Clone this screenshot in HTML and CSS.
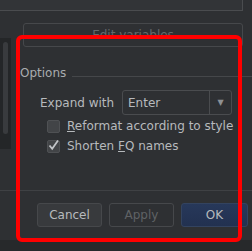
FILE: index.html
```html
<!DOCTYPE html>
<html lang="en">
<head>
    <meta charset="UTF-8">
    <meta name="viewport" content="width=device-width, initial-scale=1.0">
    <title>Live template options</title>
    <link rel="stylesheet" href="styles.css">
</head>
<body>
    <div class="top-box"></div>
    <div class="middle">
        <div class="side-panel">
            <div class="side-thumb"></div>
        </div>
        <div class="main">
            <button class="edit-btn" disabled>Edit variables</button>
            <div class="group-title">
                <span>Options</span>
                <div class="group-line"></div>
            </div>
            <div class="expand-row">
                <span class="expand-label">Expand with</span>
                <div class="combo">
                    <span class="combo-value">Enter</span>
                    <span class="combo-arrow">&#9660;</span>
                </div>
            </div>
            <label class="check-row">
                <span class="checkbox"></span>
                <span><u>R</u>eformat according to style</span>
            </label>
            <label class="check-row">
                <span class="checkbox checked">
                    <svg width="13" height="13" viewBox="0 0 13 13"><path d="M2.5 6.5 L5.2 9.8 L11 1.5" fill="none" stroke="#c2c5c8" stroke-width="1.8"/></svg>
                </span>
                <span>Shorten <u>F</u>Q names</span>
            </label>
        </div>
    </div>
    <div class="footer">
        <button class="btn">Cancel</button>
        <button class="btn btn-disabled" disabled>Apply</button>
        <button class="btn btn-ok">OK</button>
    </div>
    <div class="bottom-strip"></div>

    <!-- highlight frame over the dialog -->
    <div class="highlight"></div>
</body>
</html>
```

FILE: styles.css
```css
body {
    font-family: "DejaVu Sans", sans-serif;
    font-size: 12px;
    color: #b7babd;
    background-color: #2e3033;
    margin: 0;
    width: 252px;
    height: 251px;
    overflow: hidden;
    display: flex;
    flex-direction: column;
    position: relative;
}
.top-box {
    width: 242px;
    height: 10px;
    flex-shrink: 0;
    background: #323437;
    border-right: 1px solid #4a4c4f;
    border-bottom: 1px solid #4a4c4f;
}
.middle {
    flex: 1;
    display: flex;
}
.side-panel {
    width: 11px;
    height: 111px;
    margin-top: 27px;
    background: #242628;
    flex-shrink: 0;
}
.side-thumb {
    width: 5px;
    height: 92px;
    margin: 4px 0 0 3px;
    border-radius: 3px;
    background: #393b3e;
}
.main {
    flex: 1;
    padding-left: 5px;
}
.edit-btn {
    display: block;
    width: 220px;
    height: 24px;
    margin: 12px 0 0 7px;
    font-family: inherit;
    font-size: 12px;
    color: #65686b;
    background: transparent;
    border: 1px solid #46484b;
    border-radius: 3px;
}
.group-title {
    display: flex;
    align-items: center;
    margin: 19px 0 0 4px;
    line-height: 14px;
    color: #a9acaf;
}
.group-line {
    flex: 1;
    height: 1px;
    margin: 7px 0 0 6px;
    background: #45474a;
}
.expand-row {
    display: flex;
    align-items: center;
    margin: 10px 0 0 24px;
}
.expand-label {
    width: 82px;
}
.combo {
    width: 108px;
    height: 23px;
    display: flex;
    align-items: center;
    border: 1px solid #4a4c4f;
    border-radius: 3px;
}
.combo-value {
    flex: 1;
    padding-left: 5px;
}
.combo-arrow {
    width: 21px;
    height: 23px;
    line-height: 23px;
    text-align: center;
    font-size: 8px;
    color: #8e9194;
    border-left: 1px solid #4a4c4f;
}
.check-row {
    display: flex;
    align-items: center;
    height: 20px;
    margin-left: 31px;
    white-space: nowrap;
}
.check-row:first-of-type {
    margin-top: 1px;
}
.checkbox {
    width: 13px;
    height: 13px;
    margin-right: 7px;
    box-sizing: border-box;
    background: #424447;
    border: 1px solid #4f5154;
    border-radius: 2px;
    flex-shrink: 0;
    position: relative;
}
.checkbox svg {
    position: absolute;
    left: -1px;
    top: -2px;
}
.footer {
    flex-shrink: 0;
    display: flex;
    gap: 7px;
    padding: 12px 0 13px 37px;
    border-top: 1px solid #3f4144;
}
.btn {
    width: 65px;
    height: 24px;
    flex-shrink: 0;
    font-family: inherit;
    font-size: 12px;
    color: #b7babd;
    background: #383a3d;
    border: 1px solid #46484b;
    border-radius: 3px;
}
.btn-disabled {
    color: #5f6265;
    background: transparent;
}
.btn-ok {
    width: 67px;
    background: linear-gradient(#27385a, #223150);
    border-color: #33435f;
}
.bottom-strip {
    height: 11px;
    flex-shrink: 0;
    background: #27292b;
}
.highlight {
    position: absolute;
    left: 16px;
    top: 35px;
    width: 226px;
    height: 207px;
    box-sizing: border-box;
    border: 4px solid #ff0000;
    border-radius: 6px;
}
```
